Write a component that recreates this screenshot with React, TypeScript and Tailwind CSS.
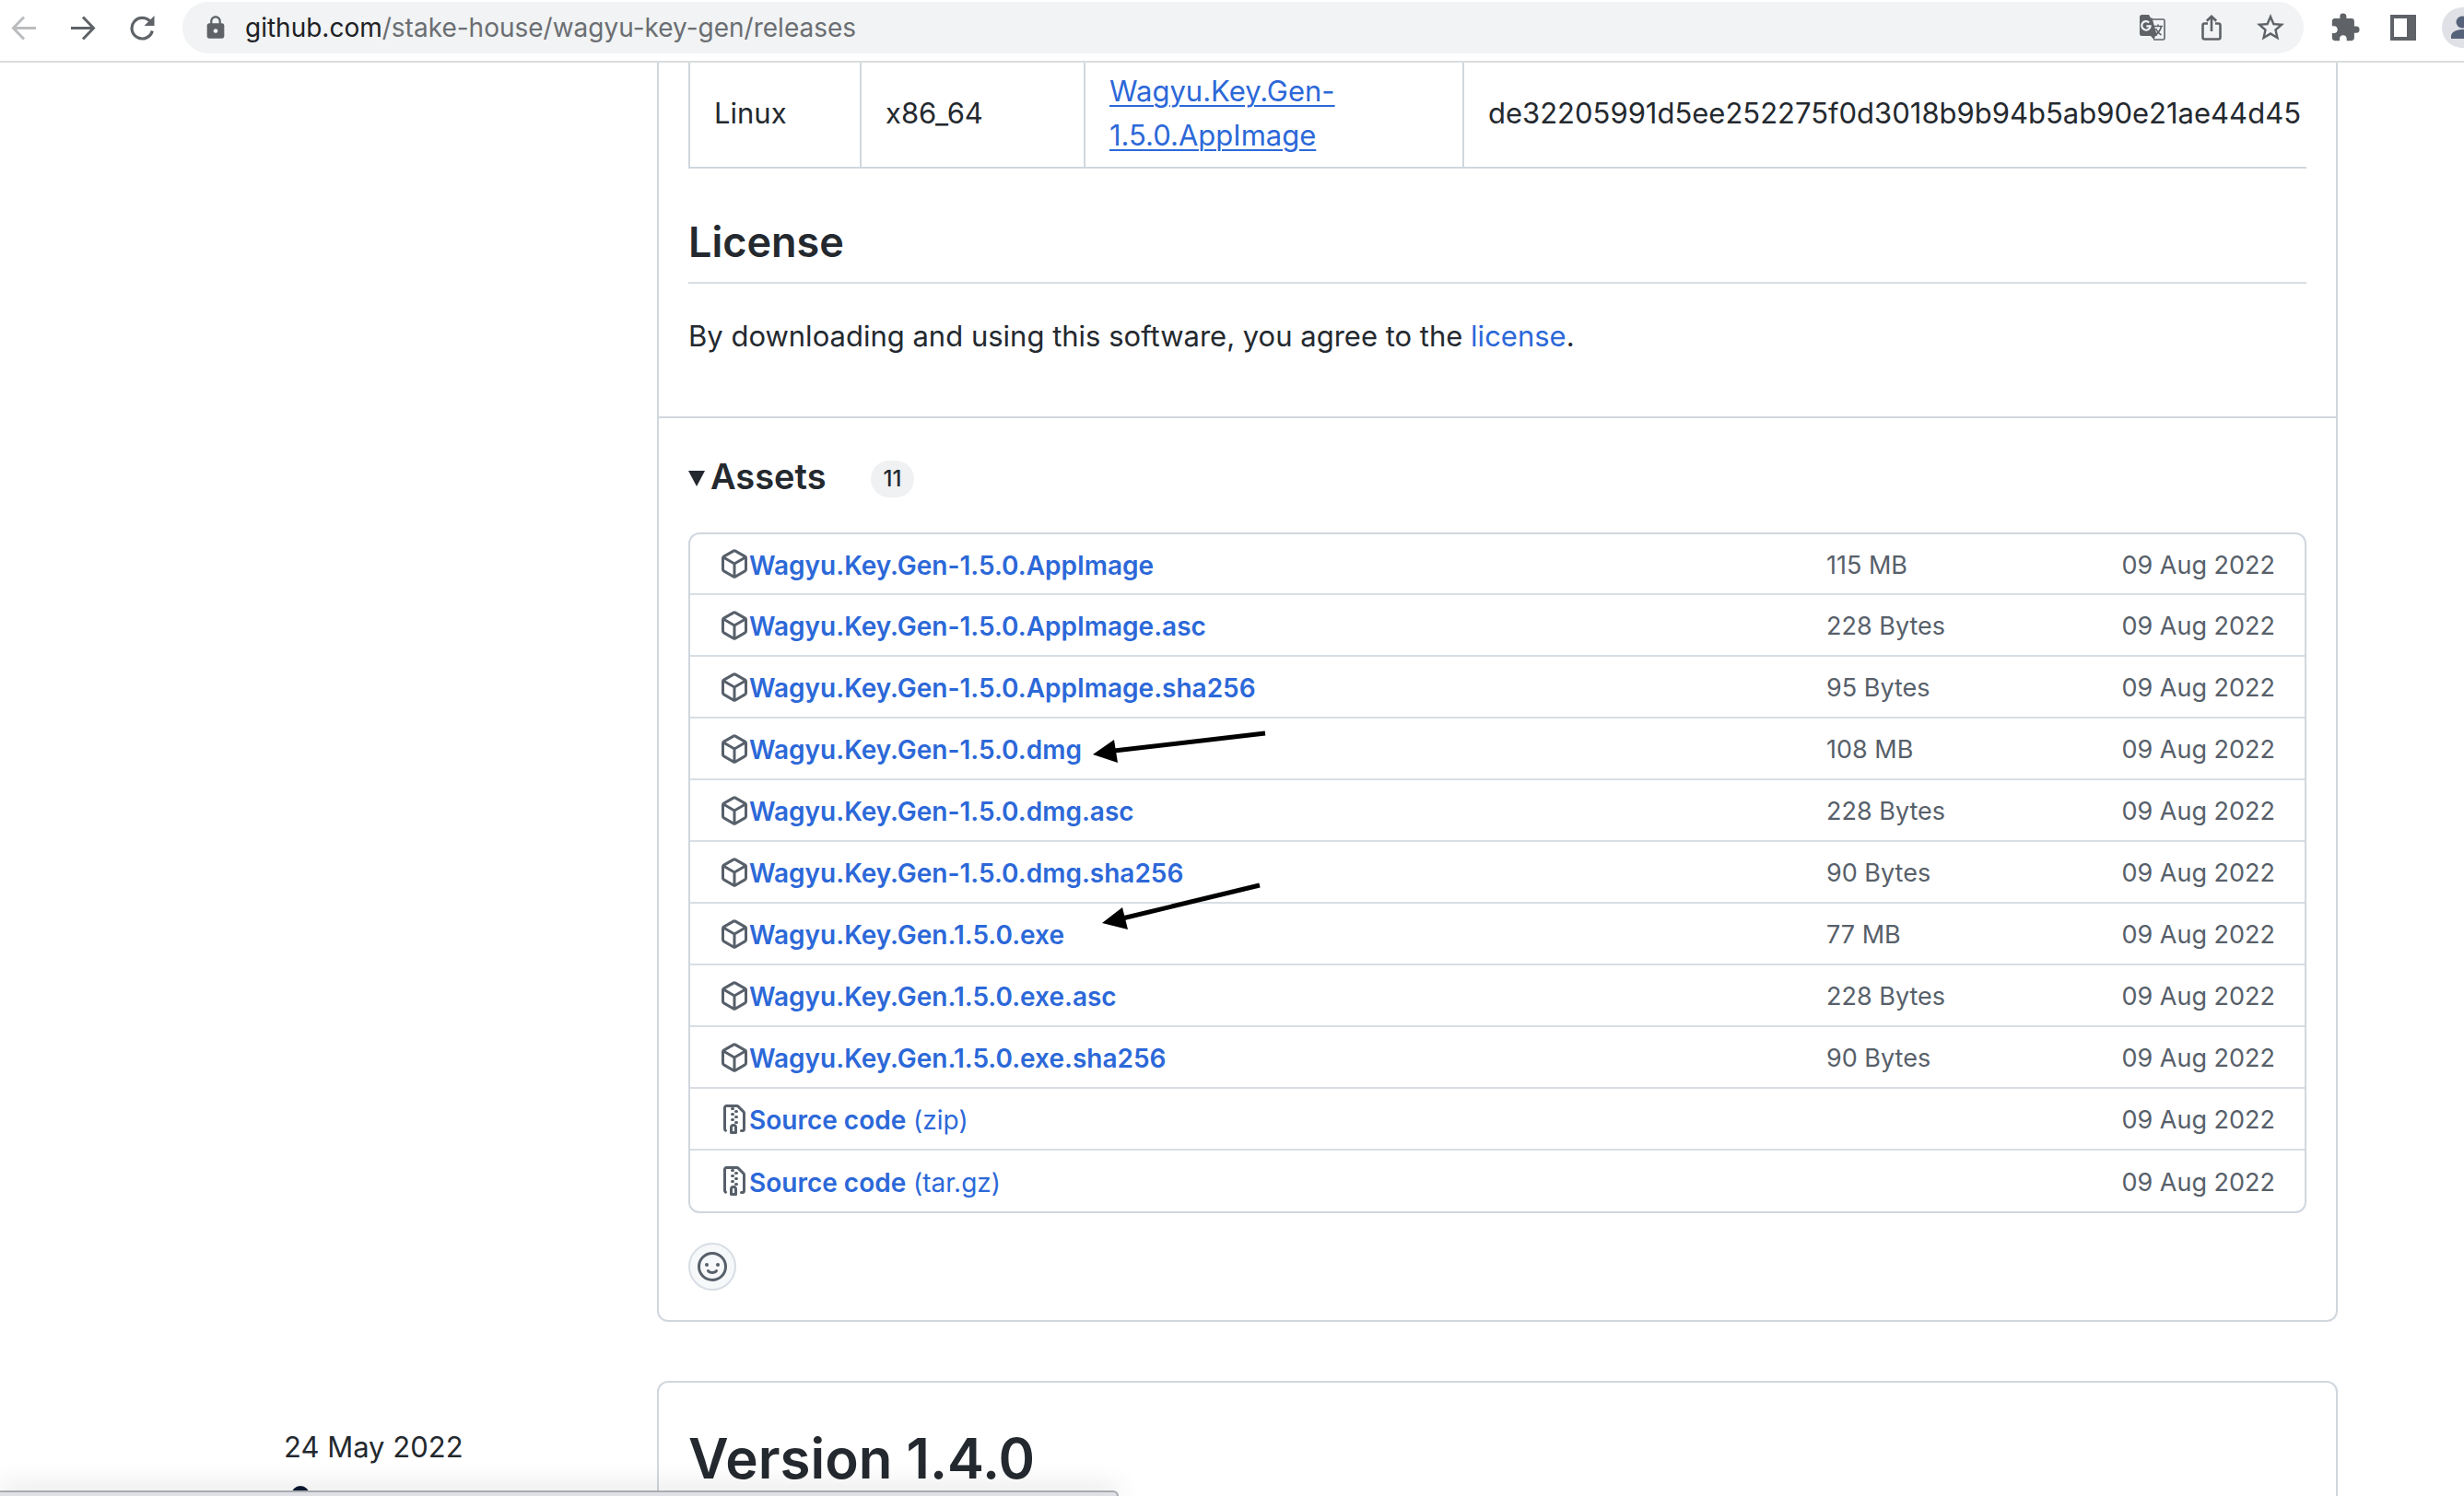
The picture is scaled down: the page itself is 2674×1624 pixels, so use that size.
import React from "react";
import { MdExtension, MdLock, MdStarOutline } from "react-icons/md";

type Asset = { name: string; suffix?: string; size: string; zip?: boolean };

const ASSETS: Asset[] = [
  { name: "Wagyu.Key.Gen-1.5.0.AppImage", size: "115 MB" },
  { name: "Wagyu.Key.Gen-1.5.0.AppImage.asc", size: "228 Bytes" },
  { name: "Wagyu.Key.Gen-1.5.0.AppImage.sha256", size: "95 Bytes" },
  { name: "Wagyu.Key.Gen-1.5.0.dmg", size: "108 MB" },
  { name: "Wagyu.Key.Gen-1.5.0.dmg.asc", size: "228 Bytes" },
  { name: "Wagyu.Key.Gen-1.5.0.dmg.sha256", size: "90 Bytes" },
  { name: "Wagyu.Key.Gen.1.5.0.exe", size: "77 MB" },
  { name: "Wagyu.Key.Gen.1.5.0.exe.asc", size: "228 Bytes" },
  { name: "Wagyu.Key.Gen.1.5.0.exe.sha256", size: "90 Bytes" },
  { name: "Source code", suffix: "(zip)", size: "", zip: true },
  { name: "Source code", suffix: "(tar.gz)", size: "", zip: true },
];

const PACKAGE_PATH =
  "M8.878.392a1.75 1.75 0 0 0-1.756 0l-5.250 3.045A1.75 1.75 0 0 0 1 4.951v6.098c0 .624.332 1.200.872 1.514l5.250 3.045a1.75 1.75 0 0 0 1.756 0l5.250-3.045c.540-.313.872-.890.872-1.514V4.951c0-.624-.332-1.200-.872-1.514L8.878.392ZM7.875 1.690a.25.25 0 0 1 .25 0l4.630 2.685L8 7.133 3.245 4.375l4.630-2.685ZM2.500 5.677v5.372c0 .090.047.171.125.216l4.625 2.683V8.432Zm6.250 8.271 4.625-2.683a.25.25 0 0 0 .125-.216V5.677L8.750 8.432Z";
const ZIP_PATH =
  "M3.500 1.750v11.500c0 .090.048.173.126.217a.75.75 0 0 1-.752 1.298A1.748 1.748 0 0 1 2 13.250V1.750C2 .784 2.784 0 3.750 0h5.586c.464 0 .909.185 1.237.513l2.914 2.914c.329.328.513.773.513 1.237v8.586A1.750 1.750 0 0 1 12.250 15h-.5a.75.75 0 0 1 0-1.500h.5a.25.25 0 0 0 .25-.25V4.664a.25.25 0 0 0-.073-.177L9.513 1.573a.25.25 0 0 0-.177-.073H7.250a.75.75 0 0 1 0 1.500h-.5a.75.75 0 0 1 0-1.500h-3a.25.25 0 0 0-.25.25Zm3.750 8.750h.5c.966 0 1.750.784 1.750 1.750v3a.75.75 0 0 1-.75.75h-2.500a.75.75 0 0 1-.75-.75v-3c0-.966.784-1.750 1.750-1.750ZM6 5.250a.75.75 0 0 1 .75-.75h.5a.75.75 0 0 1 0 1.500h-.5A.75.75 0 0 1 6 5.250Zm.75 2.250h.5a.75.75 0 0 1 0 1.500h-.5a.75.75 0 0 1 0-1.500ZM8 6.750A.75.75 0 0 1 8.750 6h.5a.75.75 0 0 1 0 1.500h-.5A.75.75 0 0 1 8 6.750ZM8.750 3h.5a.75.75 0 0 1 0 1.500h-.5a.75.75 0 0 1 0-1.500ZM8 9.750A.75.75 0 0 1 8.750 9h.5a.75.75 0 0 1 0 1.500h-.5A.75.75 0 0 1 8 9.750Zm-1 2.500v2.250h1v-2.250a.25.25 0 0 0-.25-.25h-.5a.25.25 0 0 0-.25.25Z";

function AssetIcon({ zip }: { zip?: boolean }) {
  return (
    <svg className="size-8 shrink-0 text-[#57606a]" viewBox="0 0 16 16" fill="currentColor" fillRule="evenodd" aria-hidden>
      <path d={zip ? ZIP_PATH : PACKAGE_PATH} />
    </svg>
  );
}

function SmileyIcon() {
  return (
    <svg className="size-8" viewBox="0 0 16 16" fill="none" stroke="currentColor" strokeWidth="1.5" strokeLinecap="round" aria-hidden>
      <circle cx="8" cy="8" r="7.250" />
      <path d="M5.750 10.250S6.400 11.250 8 11.250s2.250-1 2.250-1" />
      <circle cx="5" cy="7" r="1" fill="currentColor" stroke="none" />
      <circle cx="11" cy="7" r="1" fill="currentColor" stroke="none" />
    </svg>
  );
}

function BackIcon() {
  return (
    <svg className="size-7" viewBox="0 0 28 28" fill="none" stroke="currentColor" strokeWidth="3">
      <path d="M27 14.500H3M14 2.500L2.500 14.500 14 26.500" />
    </svg>
  );
}

function ForwardIcon() {
  return (
    <svg className="size-7" viewBox="0 0 28 28" fill="none" stroke="currentColor" strokeWidth="3">
      <path d="M1 14.500h24M14 2.500l11.500 12L14 26.500" />
    </svg>
  );
}

function ReloadIcon() {
  return (
    <svg className="size-7" viewBox="0 0 28 28" fill="none">
      <path d="M23.500 8A11.300 11.300 0 1 0 25.300 17.500" stroke="currentColor" strokeWidth="3.200" />
      <path d="M27.500 1v11h-11z" fill="currentColor" />
    </svg>
  );
}

function TranslateIcon() {
  return (
    <svg className="size-7" viewBox="0 0 28 28">
      <path d="M13 5h12.500a1.500 1.500 0 0 1 1.500 1.500v19a1.500 1.500 0 0 1-1.500 1.500H15" fill="none" stroke="currentColor" strokeWidth="1.600" />
      <path d="M2.500 0H10l2 3.500h1.500L19 23h-2l-1.500 4-3.500-4H2.500A2.500 2.500 0 0 1 0 20.500v-18A2.500 2.500 0 0 1 2.500 0z" fill="currentColor" />
      <path d="M10.200 8.500a4.700 4.700 0 1 0 1.400 3.800H7.300" fill="none" stroke="#f1f3f4" strokeWidth="2.200" />
      <path d="M15.500 12.500H25M20 10.500v2M23.500 12.500c-.8 4-3.500 7.500-6.500 9.500M17.500 15c1.200 2.800 3.500 5.500 6 7" fill="none" stroke="currentColor" strokeWidth="1.600" />
    </svg>
  );
}

function ShareIcon() {
  return (
    <svg className="h-7 w-6" viewBox="0 0 24 28" fill="none" stroke="currentColor" strokeWidth="2.600">
      <path d="M8 9.500H4.500a2 2 0 0 0-2 2v13a2 2 0 0 0 2 2h15a2 2 0 0 0 2-2v-13a2 2 0 0 0-2-2H16M12 18V2M6.800 6.800L12 1.800l5.200 5" />
    </svg>
  );
}

function SidePanelIcon() {
  return (
    <svg className="size-7" viewBox="0 0 28 28">
      <path d="M0 0h28v28H0zM4 4v20h14V4z" fill="currentColor" fillRule="evenodd" />
    </svg>
  );
}

function BrowserBar() {
  return (
    <header className="flex h-[68px] shrink-0 items-start border-b-2 border-[#dadcdd] bg-white text-[#5f6368]">
      <div className="flex h-[60px] shrink-0 items-center gap-9 pl-3">
        <button aria-label="Back" className="text-[#babcbe]"><BackIcon /></button>
        <button aria-label="Forward"><ForwardIcon /></button>
        <button aria-label="Reload"><ReloadIcon /></button>
      </div>
      <div className="mt-0.5 ml-[30px] flex h-14 min-w-0 flex-1 items-center rounded-full bg-[#f1f3f4] pr-[18px] pl-[22px]">
        <MdLock className="size-7" aria-hidden />
        <div className="ml-[18px] min-w-0 flex-1 truncate text-[28px] leading-10 text-[#6b6e72]">
          <span className="text-[#202124]">github.com</span>/stake-house/wagyu-key-gen/releases
        </div>
        <div className="flex items-center">
          <button aria-label="Translate this page"><TranslateIcon /></button>
          <button aria-label="Share" className="ml-[38px]"><ShareIcon /></button>
          <button aria-label="Bookmark" className="ml-[34px]"><MdStarOutline className="size-9" /></button>
        </div>
      </div>
      <div className="flex h-[60px] shrink-0 items-center overflow-hidden pl-7">
        <button aria-label="Extensions"><MdExtension className="size-[34px]" /></button>
        <button aria-label="Side panel" className="ml-8"><SidePanelIcon /></button>
        <button aria-label="Profile" className="ml-7 w-6 overflow-hidden">
          <svg className="size-11" viewBox="0 0 44 44">
            <circle cx="22" cy="22" r="22" fill="#dfe1e6" />
            <circle cx="22" cy="16" r="6.500" fill="#56617a" />
            <path d="M10 34v-3c0-4.500 7-7 12-7s12 2.500 12 7v3z" fill="#56617a" />
          </svg>
        </button>
      </div>
    </header>
  );
}

function PlatformTable() {
  const cell = "border-r-2 border-[#d0d7de] px-[26px] pt-[7px] pb-[10px]";
  return (
    <table className="w-full table-fixed border-b-2 border-l-2 border-[#d0d7de] text-[31px] leading-[48px]">
      <colgroup>
        <col className="w-[186px]" />
        <col className="w-[243px]" />
        <col className="w-[411px]" />
        <col />
      </colgroup>
      <tbody>
        <tr>
          <td className={cell}>Linux</td>
          <td className={cell}>x86_64</td>
          <td className={cell}>
            <a href="#appimage" className="text-[#2c68d8] underline decoration-2 underline-offset-4">
              Wagyu.Key.Gen-<br />1.5.0.AppImage
            </a>
          </td>
          <td className="pt-[7px] pb-[10px] pl-[26px] whitespace-nowrap">
            de32205991d5ee252275f0d3018b9b94b5ab90e21ae44d45
          </td>
        </tr>
      </tbody>
    </table>
  );
}

function AssetTable() {
  return (
    <div className="relative rounded-xl border-2 border-[#d0d7de]">
      <table className="w-full table-fixed leading-10">
        <colgroup>
          <col />
          <col className="w-[279px]" />
          <col className="w-[240px]" />
        </colgroup>
        <tbody>
          {ASSETS.map((a) => (
            <tr
              key={a.name + (a.suffix ?? "")}
              className="h-[67px] border-t-2 border-[#d8dee4] first:h-[65px] first:border-t-0"
            >
              <td className="pl-8">
                <div className="flex items-center">
                  <AssetIcon zip={a.zip} />
                  <a href="#download" className="pt-[3px] text-[28px] text-[#2c68d8]">
                    <span className="font-semibold">{a.name}</span>
                    {a.suffix ? " " + a.suffix : ""}
                  </a>
                </div>
              </td>
              <td className="pt-[3px] text-[27px] text-[#57606a]">{a.size}</td>
              <td className="pt-[3px] pr-8 text-right text-[27px] whitespace-nowrap text-[#57606a]">09 Aug 2022</td>
            </tr>
          ))}
        </tbody>
      </table>
      <svg
        className="pointer-events-none absolute top-[209px] left-[430px] h-[230px] w-[210px]"
        viewBox="0 0 210 230"
        aria-hidden
      >
        <path d="M30 26L194 7" stroke="#000" strokeWidth="5" />
        <path d="M7 30L30 14l4 25z" />
        <path d="M39 208L188 172" stroke="#000" strokeWidth="5" />
        <path d="M17 213L39 196l6 24z" />
      </svg>
    </div>
  );
}

export default function App() {
  return (
    <div className="flex h-screen flex-col overflow-hidden bg-white font-['Inter',sans-serif] text-[#24292f]">
      <BrowserBar />
      <main className="relative min-h-0 flex-1 overflow-hidden pr-[137px] pl-[308px]">
        <section className="ml-[405px] rounded-b-xl border-x-2 border-b-2 border-[#d0d7de]">
          <div className="border-b-2 border-[#d0d7de] px-8 pb-8">
            <PlatformTable />
            <h2 className="mt-12 mb-[33px] border-b-2 border-[#d8dee4] pt-0.5 pb-[13px] text-[45px] leading-[60px] font-semibold">
              License
            </h2>
            <p className="mb-[31px] text-[31px] leading-[48px]">
              By downloading and using this software, you agree to the{" "}
              <a href="#license" className="text-[#2c68d8]">license</a>.
            </p>
          </div>
          <div className="p-8">
            <button aria-expanded="true" className="mb-[30px] flex h-[62px] items-center">
              <svg className="mt-1 h-[17px] w-[18px]" viewBox="0 0 18 17" fill="currentColor" aria-hidden>
                <path d="M0 0h18L9 17z" />
              </svg>
              <span className="ml-1.5 text-[38px] leading-[60px] font-semibold">Assets</span>
              <span className="mt-1.5 ml-12 flex h-10 items-center rounded-full bg-[#eff1f3] px-3.5 text-2xl font-medium">11</span>
            </button>
            <AssetTable />
            <button
              aria-label="Add your reaction"
              className="mt-8 flex size-[52px] items-center justify-center rounded-full border-2 border-[#d8dee4] bg-[#f6f8fa] text-[#57606a]"
            >
              <SmileyIcon />
            </button>
          </div>
        </section>

        <div className="mt-16 flex">
          <div className="w-[405px] shrink-0 pt-12 text-[31px] leading-[48px]">
            <time>24 May 2022</time>
            <div className="mt-[18px] ml-2 size-5 rounded-full bg-[#0c1a33]" />
          </div>
          <section className="h-60 flex-1 rounded-t-xl border-2 border-[#d0d7de] px-8 pt-[42px]">
            <h1 className="text-[60px] leading-[80px] font-semibold">Version 1.4.0</h1>
          </section>
        </div>
        <div className="absolute bottom-0 left-0 h-1.5 w-[1214px] rounded-tr-lg border-t-2 border-r-2 border-[#a9abb0] bg-[#dfe1e6] shadow-[0_0_28px_rgba(0,0,0,0.3)]" />
      </main>
    </div>
  );
}
